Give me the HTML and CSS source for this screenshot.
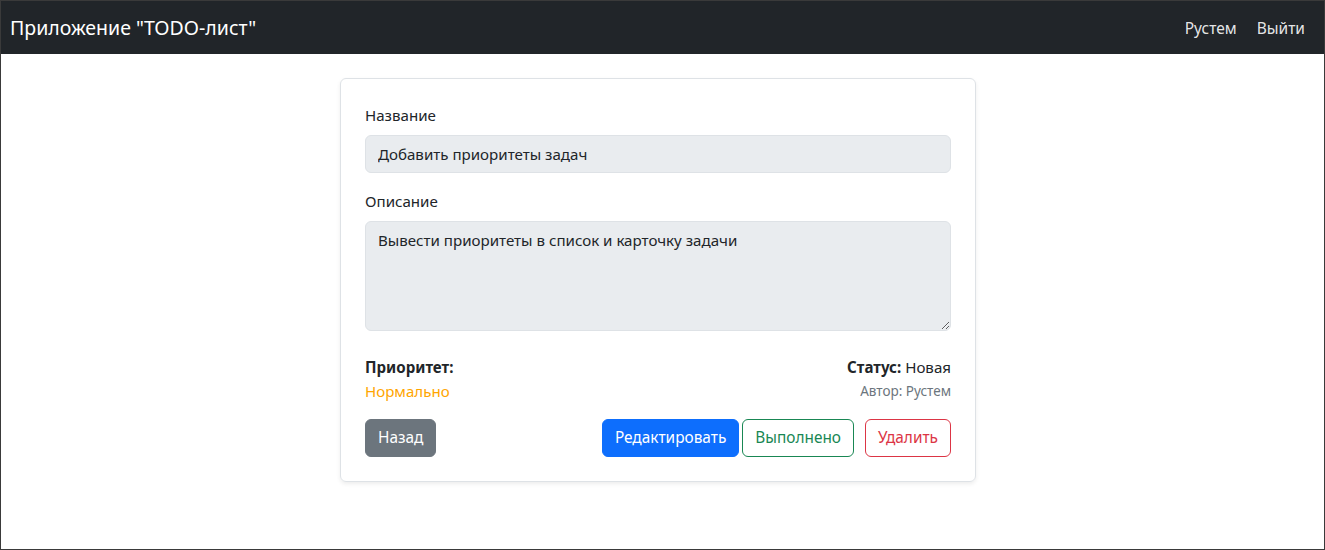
FILE: index.html
```html
<!DOCTYPE html>
<html lang="ru">
<head>
<meta charset="utf-8">
<title>TODO</title>
<link rel="stylesheet" href="styles.css">
</head>
<body>
<div class="frame">
  <nav class="navbar">
    <a class="brand" href="#">Приложение "TODO-лист"</a>
    <div class="nav-links">
      <a class="nav-link" href="#">Рустем</a>
      <a class="nav-link" href="#">Выйти</a>
    </div>
  </nav>
  <main class="main">
    <div class="card">
      <div class="field">
        <label class="label">Название</label>
        <input class="control" type="text" value="Добавить приоритеты задач" readonly>
      </div>
      <div class="field field-last">
        <label class="label">Описание</label>
        <textarea class="control area" readonly>Вывести приоритеты в список и карточку задачи</textarea>
      </div>
      <div class="meta">
        <div class="meta-left">
          <div class="strong">Приоритет:</div>
          <div class="priority">Нормально</div>
        </div>
        <div class="meta-right">
          <div><span class="strong">Статус:</span> Новая</div>
          <div class="author">Автор: Рустем</div>
        </div>
      </div>
      <div class="actions">
        <a class="btn btn-secondary" href="#">Назад</a>
        <div class="actions-right">
          <a class="btn btn-primary" href="#">Редактировать</a>
          <button class="btn btn-outline-success">Выполнено</button>
          <button class="btn btn-outline-danger">Удалить</button>
        </div>
      </div>
    </div>
  </main>
</div>
</body>
</html>
```
FILE: styles.css
```css
* { box-sizing: border-box; }
html, body { margin: 0; padding: 0; }
body {
  font-family: "Noto Sans", "Open Sans", sans-serif;
  font-size: 15.1px;
  line-height: 24px;
  color: #212529;
  background: #fff;
}
.frame {
  height: 550px;
  border: 1px solid #3a3a3a;
  overflow: hidden;
}
.navbar {
  background: #212529;
  height: 53px;
  display: flex;
  align-items: center;
  justify-content: space-between;
  padding: 0 9px 0 9px;
}
.brand {
  color: #fff;
  font-size: 19.5px;
  text-decoration: none;
  line-height: 30px;
}
.nav-links { display: flex; }
.nav-link {
  color: rgba(255, 255, 255, 0.9);
  font-size: 15.5px;
  text-decoration: none;
  padding: 8px 10px;
}
.main {
  padding-top: 24px;
  padding-left: 339px;
}
.card {
  width: 636px;
  border: 1px solid #dee2e6;
  border-radius: 6px;
  box-shadow: 0 2px 4px rgba(0, 0, 0, 0.075);
  padding: 24px;
}
.field { margin-bottom: 16px; }
.field-last { margin-bottom: 24px; }
.label {
  display: block;
  margin-bottom: 8px;
}
.control {
  display: block;
  width: 100%;
  font-family: inherit;
  font-size: inherit;
  line-height: 24px;
  color: #212529;
  background: #e9ecef;
  border: 1px solid #dee2e6;
  border-radius: 6px;
  padding: 6px 12px;
  outline: none;
  margin: 0;
}
.area {
  height: 110px;
  resize: vertical;
}
.meta {
  display: flex;
  justify-content: space-between;
  margin-bottom: 16px;
}
.meta-right { text-align: right; }
.strong { font-weight: 700; }
.priority { color: #ffa500; }
.author {
  color: #6c757d;
  font-size: 13.5px;
  line-height: 24px;
}
.actions {
  display: flex;
  justify-content: space-between;
}
.actions-right { display: flex; }
.btn {
  display: inline-block;
  font-family: inherit;
  font-size: 15.4px;
  line-height: 24px;
  padding: 6px 12px;
  border: 1px solid transparent;
  border-radius: 6px;
  text-decoration: none;
  background: transparent;
  cursor: pointer;
  margin: 0;
}
.btn-secondary { background: #6c757d; border-color: #6c757d; color: #fff; }
.btn-primary { background: #0d6efd; border-color: #0d6efd; color: #fff; }
.btn-outline-success { border-color: #198754; color: #198754; margin-left: 3px; }
.btn-outline-danger { border-color: #dc3545; color: #dc3545; margin-left: 11px; }
```
